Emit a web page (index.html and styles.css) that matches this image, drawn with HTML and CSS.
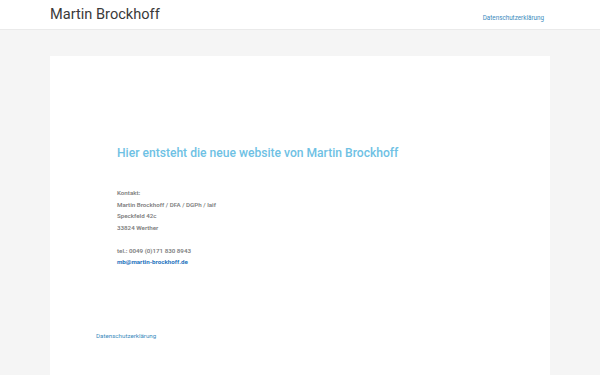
FILE: index.html
```html
<!DOCTYPE html>
<html lang="de">
<head>
    <meta charset="UTF-8">
    <meta name="viewport" content="width=device-width, initial-scale=1.0">
    <title>Martin Brockhoff</title>
    <link rel="stylesheet" href="styles.css">
</head>
<body>

    <header id="site-header">
        <div class="container header-inner">
            <a class="site-title" href="#">Martin Brockhoff</a>
            <nav class="main-nav">
                <a href="#">Datenschutzerklärung</a>
            </nav>
        </div>
    </header>

    <main id="content">
        <article class="card">
            <div class="entry">
                <h2 class="headline">Hier entsteht die neue website von Martin Brockhoff</h2>

                <p class="contact">
                    Kontakt:<br>
                    Martin Brockhoff / DFA / DGPh / laif<br>
                    Speckfeld 42c<br>
                    33824 Werther
                </p>

                <p class="contact">
                    tel.: 0049 (0)171 830 8943<br>
                    <a class="mail" href="#">mb@martin-brockhoff.de</a>
                </p>
            </div>

            <footer class="card-footer">
                <a href="#">Datenschutzerklärung</a>
            </footer>
        </article>
    </main>

</body>
</html>
```

FILE: styles.css
```css
body {
    margin: 0;
    background-color: #f5f5f5;
    font-family: Roboto, "Liberation Sans", sans-serif;
    color: #3a3a3a;
    height: 100vh;
    overflow: hidden;
}

a {
    text-decoration: none;
}

.container {
    width: 500px;
    margin: 0 auto;
}

/* Header */
#site-header {
    background-color: #fff;
    border-bottom: 1px solid #eaeaea;
    height: 29px;
}

.header-inner {
    display: flex;
    justify-content: space-between;
    align-items: center;
    height: 100%;
}

.site-title {
    font-size: 14.6px;
    color: #3a3a3a;
    line-height: 1;
}

.main-nav {
    padding-right: 6px;
}

.main-nav a {
    font-size: 6.3px;
    color: #3a8bbd;
}

/* Content card */
#content {
    padding-top: 26px;
}

.card {
    width: 500px;
    margin: 0 auto;
    background-color: #fff;
    height: calc(100vh - 56px);
    box-sizing: border-box;
}

.entry {
    padding: 87px 67px 0 67px;
}

.headline {
    margin: 0 0 25px 0;
    font-size: 12.1px;
    font-weight: 500;
    color: #6ec1e4;
    line-height: 20px;
}

.contact {
    margin: 0 0 11.5px 0;
    font-size: 6.2px;
    font-weight: 600;
    line-height: 11.6px;
    color: #808080;
}

.contact .mail {
    color: #1e73be;
    font-weight: 700;
}

.card-footer {
    padding: 42px 46px 0 46px;
}

.card-footer a {
    font-size: 6.2px;
    color: #3a8bbd;
}
```
